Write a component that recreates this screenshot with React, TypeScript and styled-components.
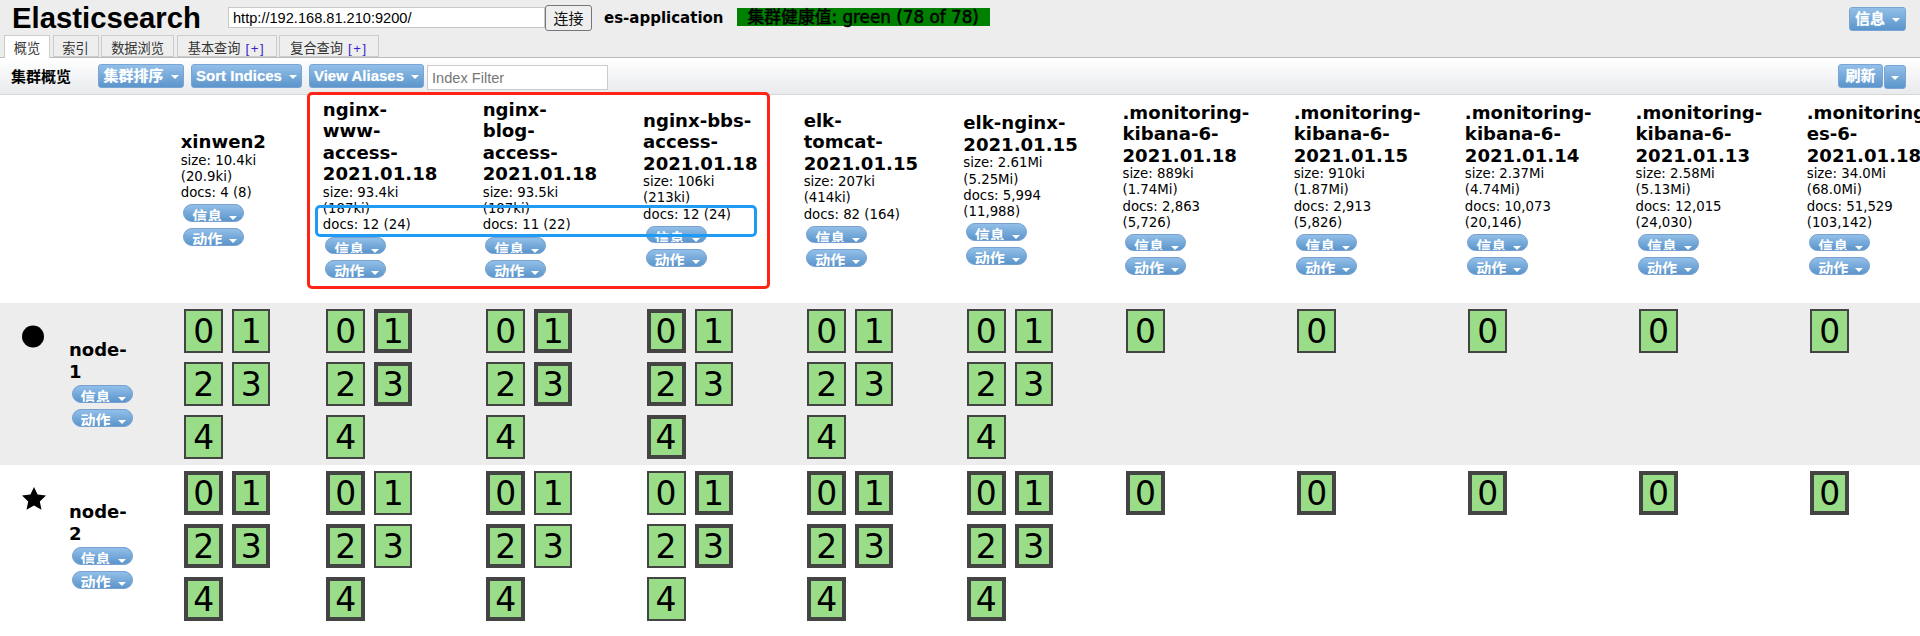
import React from "react";
import styled, { createGlobalStyle } from "styled-components";

const Global = createGlobalStyle`
  html, body { margin: 0; padding: 0; height: 636px; overflow: hidden; background: #fff; }
  * { box-sizing: border-box; }
`;

const SANS = `"Liberation Sans", "Noto Sans CJK SC", Arial, sans-serif`;
const VERDANA = `"DejaVu Sans", "Noto Sans CJK SC", Verdana, sans-serif`;

const Page = styled.div`
  position: relative;
  width: 1920px;
  height: 636px;
  overflow: hidden;
  font-family: ${VERDANA};
  color: #000;
`;
const Header = styled.header`
  background: #ededed;
  height: 57px;
`;
const TopBar = styled.div`
  display: flex;
  align-items: center;
  height: 35px;
  padding: 3px 14px 0 12px;
`;
const Title = styled.h1`
  margin: 0 28px 0 0;
  font: bold 29.3px/30px ${SANS};
  width: 188px;
  white-space: nowrap;
  position: relative;
  top: -1px;
`;
const UrlInput = styled.input`
  width: 317px;
  height: 21px;
  border: 1px solid #c8c8c8;
  padding: 0 4px;
  font: 14.6px ${SANS};
  color: #000;
  background: #fff;
  outline: none;
  position: relative;
  top: -1.5px;
`;
const ConnectButton = styled.button`
  width: 47px;
  height: 26px;
  padding: 0;
  border: 1px solid #777;
  border-radius: 3px;
  background: #efefef;
  font: 15px ${SANS};
  color: #111;
  position: relative;
  top: -1.5px;
`;
const ClusterName = styled.span`
  margin-left: 12px;
  font: bold 15px ${VERDANA};
  white-space: nowrap;
  position: relative;
  top: -1.5px;
`;
const Health = styled.span`
  margin-left: 13px;
  width: 253px;
  height: 18px;
  background: #008000;
  font: 16.8px/18px ${VERDANA};
  white-space: nowrap;
  padding-left: 11px;
  -webkit-text-stroke: 0.5px #000;
  position: relative;
  top: -2.5px;
`;
const Spacer = styled.div`
  flex: 1;
`;
const Gap = styled.div`
  flex: 0 0 7px;
`;
const TabStrip = styled.nav`
  display: flex;
  gap: 2.5px;
  height: 22px;
  padding-left: 4px;
`;
const Tab = styled.div<{ $active?: boolean; $w: number }>`
  width: ${(p) => p.$w}px;
  height: ${(p) => (p.$active ? 23 : 22)}px;
  border: 1px solid #ccc;
  border-bottom: ${(p) => (p.$active ? "none" : "1px solid #ccc")};
  background: ${(p) => (p.$active ? "#fff" : "#eee")};
  font: 13.2px/25px ${SANS};
  color: #333;
  text-align: center;
  white-space: nowrap;
  position: relative;
  z-index: 1;
`;
const Plus = styled.span`
  color: #3a1fd0;
  margin-left: 5px;
  letter-spacing: 1.6px;
`;
const Toolbar = styled.div`
  display: flex;
  align-items: center;
  height: 38px;
  padding: 0 14px 1px 11px;
  border-top: 1px solid #bbb;
  border-bottom: 1px solid #d5d8da;
  background: linear-gradient(#fff, #e8eaec);
`;
const ToolbarTitle = styled.span`
  width: 87px;
  font: bold 15px ${SANS};
  white-space: nowrap;
`;
const Caret = styled.span<{ $flush?: boolean }>`
  display: inline-block;
  width: 0;
  height: 0;
  border-left: 4px solid transparent;
  border-right: 4px solid transparent;
  border-top: 4px solid #fff;
  margin-left: ${(p) => (p.$flush ? 0 : 7)}px;
  vertical-align: 2px;
`;
const BlueButton = styled.div<{ $w: number }>`
  width: ${(p) => p.$w}px;
  height: 24px;
  border: 1px solid #78a5d6;
  border-radius: 3px;
  background: linear-gradient(#92bfe8, #5b95cb);
  color: #fff;
  font: bold 15px/22px ${SANS};
  text-align: center;
  white-space: nowrap;
  text-shadow: 0 0 1px #b9d6f2;
  flex: none;
`;
const FilterInput = styled.input`
  width: 181px;
  height: 25px;
  margin: 4px 0 0 3px;
  border: 1px solid #ccc;
  padding: 0 4px;
  font: 14.6px ${SANS};
  background: #fff;
  outline: none;
  &::placeholder { color: #777; opacity: 1; }
`;
const SplitCaret = styled(BlueButton)`
  margin: 3px 0 0 1px;
`;
const Grid = styled.table`
  table-layout: fixed;
  border-collapse: collapse;
  border-spacing: 0;
  width: 1974px;
`;
const Column = styled.col<{ $w: number }>`
  width: ${(p) => p.$w}px;
`;
const HeadCell = styled.th`
  height: 208px;
  padding: 0 0 21px 4px;
  vertical-align: middle;
  text-align: left;
  font-weight: normal;
`;
const IndexBlock = styled.div<{ $w: number }>`
  width: ${(p) => p.$w}px;
`;
const IndexName = styled.div`
  font: bold 18.1px/21.5px ${VERDANA};
`;
const IndexStat = styled.div`
  font: 13.3px/16.2px ${VERDANA};
`;
const Pill = styled.div`
  width: 61px;
  height: 17.5px;
  margin: 3px 0 6px 2.5px;
  border: 1px solid #78a0d0;
  border-radius: 9px;
  background: linear-gradient(#92bfe8, #5b95cb);
  color: #fff;
  font: bold 15px/23px ${SANS};
  padding-left: 8px;
  white-space: nowrap;
  overflow: hidden;
  & + & { margin: 0 0 0 2.5px; height: 18px; line-height: 21px; }
`;
const NodeRow = styled.tr<{ $shaded?: boolean }>`
  background: ${(p) => (p.$shaded ? "#ededed" : "#fff")};
`;
const NodeCell = styled.td<{ $h: number }>`
  height: ${(p) => p.$h}px;
  padding: 22px 0 0 22px;
  vertical-align: top;
`;
const NodeLayout = styled.div`
  display: flex;
`;
const Marker = styled.svg`
  width: 24px;
  height: 24px;
  flex: none;
  display: block;
`;
const NodeInfo = styled.div`
  width: 62px;
  margin: 14px 0 0 23px;
`;
const NodeName = styled.div`
  font: bold 18px/21.5px ${VERDANA};
`;
const ShardCell = styled.td`
  padding: 6px 0 0 7.5px;
  vertical-align: top;
`;
const ShardGrid = styled.div`
  display: grid;
  grid-template-columns: 39px 38px;
  grid-auto-rows: 44px;
  column-gap: 9px;
  row-gap: 9px;
`;
const Shard = styled.div<{ $primary: boolean }>`
  display: flex;
  align-items: center;
  justify-content: center;
  border: ${(p) => (p.$primary ? 4 : 2)}px solid #444;
  background: #99dd88;
  font: 33px/1 ${VERDANA};
`;
const RedBox = styled.div`
  position: absolute;
  left: 307px;
  top: 92px;
  width: 463px;
  height: 197px;
  border: 3.5px solid #ff2416;
  border-radius: 5px;
  pointer-events: none;
`;
const BlueBox = styled.div`
  position: absolute;
  left: 315px;
  top: 205px;
  width: 442px;
  height: 32px;
  border: 3.5px solid #1e9bf5;
  border-radius: 5px;
  pointer-events: none;
`;

type Index = { name: string; size: string; docs: string; w: number; shards: number; kind: "all" | "odd" | "even" };
const indices: Index[] = [
  { name: "xinwen2", size: "size: 10.4ki (20.9ki)", docs: "docs: 4 (8)", w: 98, shards: 5, kind: "all" },
  { name: "nginx-www-access-2021.01.18", size: "size: 93.4ki (187ki)", docs: "docs: 12 (24)", w: 115.5, shards: 5, kind: "odd" },
  { name: "nginx-blog-access-2021.01.18", size: "size: 93.5ki (187ki)", docs: "docs: 11 (22)", w: 115.5, shards: 5, kind: "odd" },
  { name: "nginx-bbs-access-2021.01.18", size: "size: 106ki (213ki)", docs: "docs: 12 (24)", w: 115.5, shards: 5, kind: "even" },
  { name: "elk-tomcat-2021.01.15", size: "size: 207ki (414ki)", docs: "docs: 82 (164)", w: 115.5, shards: 5, kind: "all" },
  { name: "elk-nginx-2021.01.15", size: "size: 2.61Mi (5.25Mi)", docs: "docs: 5,994 (11,988)", w: 115.5, shards: 5, kind: "all" },
  { name: ".monitoring-kibana-6-2021.01.18", size: "size: 889ki (1.74Mi)", docs: "docs: 2,863 (5,726)", w: 129, shards: 1, kind: "all" },
  { name: ".monitoring-kibana-6-2021.01.15", size: "size: 910ki (1.87Mi)", docs: "docs: 2,913 (5,826)", w: 129, shards: 1, kind: "all" },
  { name: ".monitoring-kibana-6-2021.01.14", size: "size: 2.37Mi (4.74Mi)", docs: "docs: 10,073 (20,146)", w: 129, shards: 1, kind: "all" },
  { name: ".monitoring-kibana-6-2021.01.13", size: "size: 2.58Mi (5.13Mi)", docs: "docs: 12,015 (24,030)", w: 129, shards: 1, kind: "all" },
  { name: ".monitoring-es-6-2021.01.18", size: "size: 34.0Mi (68.0Mi)", docs: "docs: 51,529 (103,142)", w: 129, shards: 1, kind: "all" },
];
const colWidths = [176.5, 142, 159.7, 160.2, 160.4, 159.5, 159, 171, 171, 170.5, 171];

const isPrimary = (ix: Index, shard: number, node: 1 | 2) => {
  if (ix.kind === "all") return node === 2;
  const oddShard = shard % 2 === 1;
  const onNode1 = ix.kind === "odd" ? oddShard : !oddShard;
  return node === 1 ? onNode1 : !onNode1;
};

const Menu = ({ label }: { label: string }) => (
  <Pill>
    {label}
    <Caret />
  </Pill>
);

const Node = ({ name, node, h, shaded }: { name: string; node: 1 | 2; h: number; shaded?: boolean }) => (
  <NodeRow $shaded={shaded}>
    <NodeCell $h={h}>
      <NodeLayout>
        <Marker viewBox="0 0 24 24">
          {node === 1 ? (
            <circle cx="11" cy="11.5" r="11" fill="#000" />
          ) : (
            <path d="M12 0l3.6 7.6 8.4 1-6.2 5.8 1.7 8.3-7.5-4.1-7.5 4.1 1.7-8.3L0 8.6l8.4-1z" fill="#000" />
          )}
        </Marker>
        <NodeInfo>
          <NodeName>{name}</NodeName>
          <Menu label="信息" />
          <Menu label="动作" />
        </NodeInfo>
      </NodeLayout>
    </NodeCell>
    {indices.map((ix) => (
      <ShardCell key={ix.name}>
        <ShardGrid>
          {Array.from({ length: ix.shards }, (_, i) => (
            <Shard key={i} $primary={isPrimary(ix, i, node)}>
              {i}
            </Shard>
          ))}
        </ShardGrid>
      </ShardCell>
    ))}
  </NodeRow>
);

export default function App() {
  return (
    <Page>
      <Global />
      <Header>
        <TopBar>
          <Title>Elasticsearch</Title>
          <UrlInput defaultValue="http://192.168.81.210:9200/" />
          <ConnectButton>连接</ConnectButton>
          <ClusterName>es-application</ClusterName>
          <Health>集群健康值: green (78 of 78)</Health>
          <Spacer />
          <BlueButton $w={57}>
            信息
            <Caret />
          </BlueButton>
        </TopBar>
        <TabStrip>
          <Tab $active $w={46}>概览</Tab>
          <Tab $w={46}>索引</Tab>
          <Tab $w={73}>数据浏览</Tab>
          <Tab $w={100}>基本查询<Plus>[+]</Plus></Tab>
          <Tab $w={100}>复合查询<Plus>[+]</Plus></Tab>
        </TabStrip>
      </Header>
      <Toolbar>
        <ToolbarTitle>集群概览</ToolbarTitle>
        <BlueButton $w={86}>集群排序<Caret /></BlueButton>
        <Gap />
        <BlueButton $w={111}>Sort Indices<Caret /></BlueButton>
        <Gap />
        <BlueButton $w={115}>View Aliases<Caret /></BlueButton>
        <FilterInput placeholder="Index Filter" />
        <Spacer />
        <BlueButton $w={45}>刷新</BlueButton>
        <SplitCaret $w={22}><Caret $flush /></SplitCaret>
      </Toolbar>
      <Grid>
        <colgroup>
          {colWidths.map((w, i) => (
            <Column key={i} $w={w} />
          ))}
          <Column $w={171} />
        </colgroup>
        <thead>
          <tr>
            <HeadCell />
            {indices.map((ix) => (
              <HeadCell key={ix.name}>
                <IndexBlock $w={ix.w}>
                  <IndexName>{ix.name}</IndexName>
                  <IndexStat>{ix.size}</IndexStat>
                  <IndexStat>{ix.docs}</IndexStat>
                  <Menu label="信息" />
                  <Menu label="动作" />
                </IndexBlock>
              </HeadCell>
            ))}
          </tr>
        </thead>
        <tbody>
          <Node name="node-1" node={1} h={162} shaded />
          <Node name="node-2" node={2} h={171} />
        </tbody>
      </Grid>
      <RedBox />
      <BlueBox />
    </Page>
  );
}
